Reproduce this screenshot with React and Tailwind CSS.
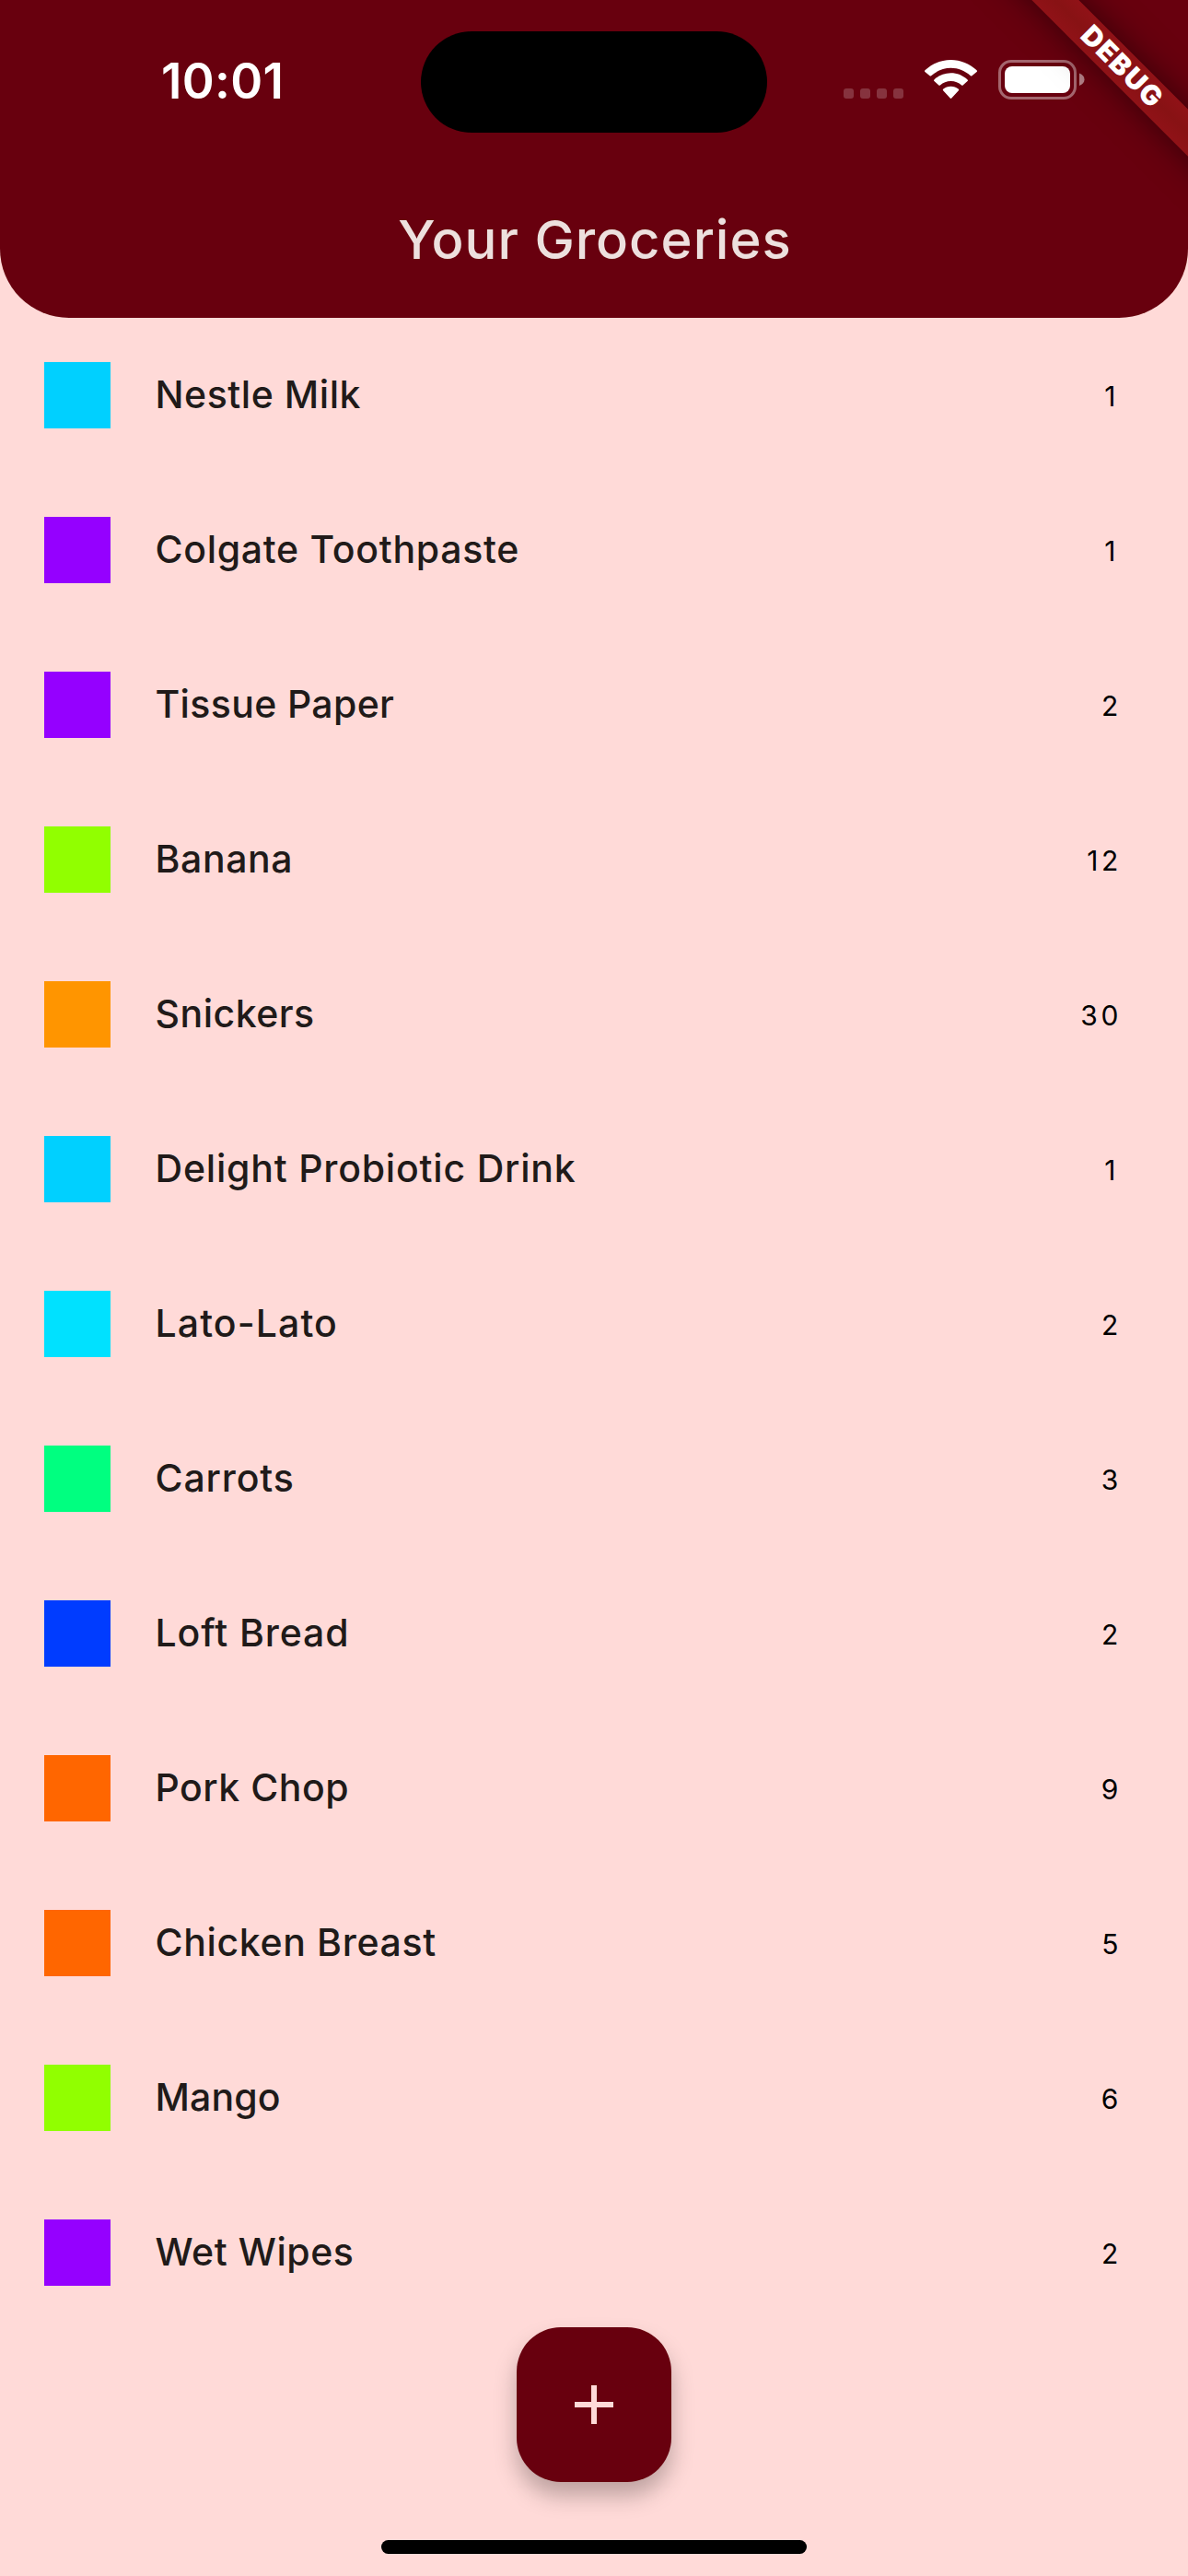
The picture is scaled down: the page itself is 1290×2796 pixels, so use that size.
const items = [
  { name: "Nestle Milk", qty: "1", color: "bg-[#00d0ff]", spacing: "tracking-[0.55px]" },
  { name: "Colgate Toothpaste", qty: "1", color: "bg-[#9500ff]", spacing: "tracking-[0.7px]" },
  { name: "Tissue Paper", qty: "2", color: "bg-[#9500ff]", spacing: "tracking-[0.35px]" },
  { name: "Banana", qty: "12", color: "bg-[#91ff00]", spacing: "tracking-[0.6px]" },
  { name: "Snickers", qty: "30", color: "bg-[#ff9500]", spacing: "tracking-[0.5px]" },
  { name: "Delight Probiotic Drink", qty: "1", color: "bg-[#00d0ff]", spacing: "tracking-[0.8px]" },
  { name: "Lato-Lato", qty: "2", color: "bg-[#00e1ff]", spacing: "tracking-[1.1px]" },
  { name: "Carrots", qty: "3", color: "bg-[#00ff80]", spacing: "tracking-[0.85px]" },
  { name: "Loft Bread", qty: "2", color: "bg-[#003cff]", spacing: "tracking-[0.9px]" },
  { name: "Pork Chop", qty: "9", color: "bg-[#ff6600]", spacing: "tracking-[0.5px]" },
  { name: "Chicken Breast", qty: "5", color: "bg-[#ff6600]", spacing: "tracking-[0.65px]" },
  { name: "Mango", qty: "6", color: "bg-[#91ff00]", spacing: "tracking-[0.15px]" },
  { name: "Wet Wipes", qty: "2", color: "bg-[#9500ff]", spacing: "tracking-[0.55px]" },
];

function StatusIcons() {
  return (
    <svg className="h-[46px] w-[264px]" viewBox="0 0 264 46" fill="none">
      <g fill="#fff" fillOpacity="0.2">
        <rect x="0" y="32" width="11" height="11" rx="3" />
        <rect x="18" y="32" width="11" height="11" rx="3" />
        <rect x="36" y="32" width="11" height="11" rx="3" />
        <rect x="54" y="32" width="11" height="11" rx="3" />
      </g>
      <g fill="#fff">
        <path d="M116.5 9.8c8 0 15.5 3.1 21.4 8.5.4.4 1.1.4 1.5 0l5.2-4.3c.5-.4.5-1.2 0-1.7C136.8 5 126.9 1 116.5 1S96.2 5 88.4 12.3c-.5.5-.5 1.3 0 1.7l5.2 4.3c.4.4 1.1.4 1.5 0 5.9-5.4 13.4-8.5 21.4-8.5z" />
        <path d="M116.5 24c4.4 0 8.5 1.6 11.6 4.4.5.4 1.1.4 1.5 0l5-4.3c.5-.5.5-1.2 0-1.7-4.9-4.6-11.3-7.2-18.1-7.2s-13.2 2.6-18.1 7.2c-.5.5-.5 1.2 0 1.7l5 4.3c.4.4 1 .4 1.5 0 3.1-2.800 7.200-4.400 11.600-4.400z" />
        <path d="M124.9 34.3c.5-.5.5-1.1 0-1.6-2.3-1.9-5.3-3-8.4-3s-6.1 1.1-8.4 3c-.5.5-.5 1.1 0 1.6l7.6 8.3c.4.5 1.2.5 1.6 0l7.6-8.3z" />
      </g>
      <rect x="169.5" y="2.5" width="82" height="40" rx="12.5" stroke="#fff" strokeOpacity="0.4" strokeWidth="3" />
      <rect x="175" y="8" width="71" height="29" rx="8" fill="#fff" />
      <path d="M256 15.5v13.5c3.6-1.2 5.5-3.7 5.5-6.75s-1.9-5.55-5.5-6.75z" fill="#fff" fillOpacity="0.5" />
    </svg>
  );
}

export default function App() {
  return (
    <div className="relative flex h-[2796px] w-[1290px] flex-col overflow-hidden bg-[#ffdad8] font-['Inter',sans-serif]">
      <header className="flex h-[345px] flex-col rounded-b-[75px] bg-[#68000e]">
        <div className="flex h-[177px] items-start justify-between pt-[34px]">
          <div className="mt-[19px] ml-[175px] w-[199px] text-[53px] leading-[70px] font-semibold tracking-[0.3px] text-white">
            10:01
          </div>
          <div className="h-[110px] w-[376px] rounded-full bg-black" />
          <div className="mt-[30px] mr-[110px]">
            <StatusIcons />
          </div>
        </div>
        <h1 className="pt-[47px] pl-[2px] text-center text-[58px] leading-[72px] font-[450] tracking-[1px] text-[#ede0de]">
          Your Groceries
        </h1>
      </header>

      <ul className="flex flex-col">
        {items.map((item) => (
          <li key={item.name} className="flex h-[168px] items-center pr-[72px] pl-[48px]">
            <span className={`size-[72px] shrink-0 ${item.color}`} />
            <span className={`ml-[48.5px] flex-1 pb-[3px] text-[41px] leading-[60px] font-[450] text-[#201a19] ${item.spacing}`}>
              {item.name}
            </span>
            <span className={`pt-[2px] text-[30px] leading-[48px] tracking-[3.6px] text-black ${item.qty === "1" ? "mr-[3px]" : ""}`}>
              {item.qty}
            </span>
          </li>
        ))}
      </ul>

      <button
        aria-label="Add item"
        className="absolute top-[2526px] left-[561px] flex size-[168px] items-center justify-center rounded-[48px] bg-[#68000e] shadow-[0_15px_24px_0_rgba(0,0,0,0.26)]"
      >
        <svg className="size-[72px]" viewBox="0 0 24 24" fill="#ffdad8">
          <path d="M19 13h-6v6h-2v-6H5v-2h6V5h2v6h6v2z" />
        </svg>
      </button>
      <div className="absolute bottom-[24px] left-[414px] h-[15px] w-[462px] rounded-full bg-black" />

      <div className="absolute top-0 right-0 size-[240px] overflow-hidden">
        <div className="absolute top-[84px] left-0 flex h-[36px] w-[480px] origin-[240px_-84px] rotate-45 items-center justify-center bg-linear-to-b from-[#901217] via-[#881214] to-[#901217] pb-[3px] pl-[2px] text-[30px] leading-none font-black tracking-[1.6px] text-white shadow-[0_0_36px_rgba(0,0,0,0.5)]">
          DEBUG
        </div>
      </div>
    </div>
  );
}
